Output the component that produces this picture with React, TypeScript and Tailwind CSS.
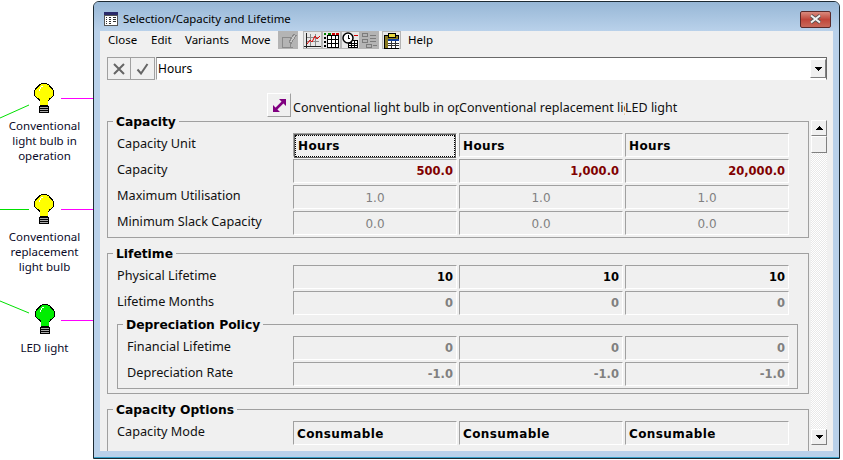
const TAHOMA = "font-['Noto_Sans','Liberation_Sans',sans-serif]";

const COLS = [
  "Conventional light bulb in operation",
  "Conventional replacement light bulb",
  "LED light",
];

const BULB_SHAPE =
  "M7 0h6v1h2v1h1v1h1v1h1v1h1v2h1v6h-1v1h-1v1h-1v1h-1v1h-1v1h-1v5H6v-5H5v-1H4v-1H3v-1H2v-1H1v-1H0V7h1V5h1V4h1V3h1V2h1V1h2z";

function Bulb({ color }: { color: string }) {
  return (
    <svg width="20" height="31" viewBox="0 0 20 31" shapeRendering="crispEdges">
      <path d={BULB_SHAPE} fill="#000" />
      <path d={BULB_SHAPE} fill={color} transform="translate(10 10.5) scale(0.9) translate(-10 -10.5)" />
      <path d="M7 3h2v1H7zM6 4h1v2H6zM5 6h1v2H5z" fill="#fff" />
      <path d="M5 23h10v7H5z" fill="#000" />
      <path d="M6 24h8v1H6zM6 26h8v1H6zM6 28h8v1H6z" fill="#a8a8a8" />
    </svg>
  );
}

function Node({ top, left, color, lines, labelTop }: { top: number; left: number; color: string; lines: string[]; labelTop: number }) {
  return (
    <>
      <div className="absolute" style={{ top, left }}>
        <Bulb color={color} />
      </div>
      <div
        className="absolute left-0 w-[89px] text-center text-[11.5px] leading-[15px] text-[#0a0a28]"
        style={{ top: labelTop }}
      >
        {lines.map((l) => (
          <div key={l}>{l}</div>
        ))}
      </div>
    </>
  );
}

function Diagram() {
  return (
    <div className="relative h-full w-[93px] shrink-0">
      <svg className="absolute inset-0" width="93" height="460" shapeRendering="crispEdges">
        <path d="M61 98.5h32M61 209.5h32M61 320.5h32" stroke="#ff00ff" />
        <path d="M0 118L29 105" stroke="#00e000" shapeRendering="auto" />
        <path d="M0 209.5h29" stroke="#00e000" />
        <path d="M0 301L29 313" stroke="#00e000" shapeRendering="auto" />
      </svg>
      <Node top={83} left={34} color="#ffff00" labelTop={118} lines={["Conventional", "light bulb in", "operation"]} />
      <Node top={194} left={34} color="#ffff00" labelTop={229} lines={["Conventional", "replacement", "light bulb"]} />
      <Node top={304} left={35} color="#00ee00" labelTop={340} lines={["LED light"]} />
    </div>
  );
}

function TableIcon() {
  return (
    <svg width="14" height="14" viewBox="0 0 14 14" shapeRendering="crispEdges">
      <rect width="14" height="14" fill="#555" />
      <rect y="0" width="14" height="3" fill="#2a2a6a" />
      <rect x="1" y="4" width="12" height="9" fill="#fff" />
      <path d="M2 5h1v1H2zM5 5h2v1H5zM9 5h3v1H9zM2 7h1v1H2zM5 7h2v1H5zM9 7h3v1H9zM2 9h1v1H2zM5 9h2v1H5zM9 9h3v1H9zM2 11h1v1H2zM5 11h2v1H5z" fill="#333" />
    </svg>
  );
}

function ToolIcon({ kind }: { kind: string }) {
  return (
    <svg width="17" height="17" viewBox="0 0 17 17" shapeRendering="crispEdges">
      {kind === "edit" && (
        <g fill="none" stroke="#8a8a8a">
          <path d="M2.500 5.500h8v10h-8zM1.500 15.500h11" />
          <path d="M9 10l5-8 2 1.500-5 8z" fill="#c8c8c8" />
        </g>
      )}
      {kind === "chart" && (
        <g>
          <path d="M6.500 2v12M11.500 2v12M2 5.500h13M2 9.500h13" stroke="#8a8a8a" fill="none" />
          <path d="M2.500 1v15M0 14.500h17" stroke="#222" fill="none" />
          <path d="M3 12l3-4 2 2 3-6 2 3 3-3" stroke="#e00000" fill="none" shapeRendering="auto" />
        </g>
      )}
      {kind === "grid" && (
        <g>
          <path d="M1 1h2v2H1zM5 1h3v2H5z" fill="#008000" />
          <path d="M9 1h3v2H9zM13 1h3v2h-3z" fill="#d00000" />
          <path d="M1 5h2v2H1zM1 9h2v2H1zM1 13h2v2H1z" fill="#000" />
          <path d="M4.500 3.500h11v12h-11zM4.500 7.500h11M4.500 11.500h11M8.500 3.500v12M12 3.500v12" stroke="#000" fill="#fff" />
        </g>
      )}
      {kind === "clock" && (
        <g>
          <path d="M6.500 8.500h9v7h-9zM6.500 11.500h9M6.500 13.500h9M9.500 8.500v7M12.500 8.500v7" stroke="#000" fill="#fff" />
          <circle cx="6" cy="6" r="5" fill="#fff" stroke="#000" strokeWidth="1.500" shapeRendering="auto" />
          <path d="M6 3v3h2" stroke="#000" fill="none" />
          <path d="M12 3h4" stroke="#d00000" />
        </g>
      )}
      {kind === "tree" && (
        <g fill="none" stroke="#7c7c7c">
          <path d="M1.500 1.500h5v3h-5zM1.500 7.500h5v3h-5zM5.500 12.500h5v3h-5zM9 3h6M9 6h6M9 9h6M12 13h4" />
        </g>
      )}
      {kind === "board" && (
        <g>
          <path d="M1.500 3.500h14v13h-14z" fill="#8a7a20" stroke="#000" />
          <path d="M5 1h7v4H5z" fill="#e8d840" stroke="#000" />
          <path d="M5 7h11v9H5z" fill="#fff" />
          <path d="M5 7h11v2H5z" fill="#1040a0" />
          <path d="M5 11h11M5 13h11M8.500 9v7M12.500 9v7" stroke="#333" fill="none" />
        </g>
      )}
    </svg>
  );
}

function MenuBar() {
  return (
    <div className="flex h-[19px] items-center pb-[2px] pl-[8px] text-[11.5px] leading-[17px] text-black">
      <span className="w-[43px]">Close</span>
      <span className="w-[34px]">Edit</span>
      <span className="w-[56px]">Variants</span>
      <span className="w-[37px]">Move</span>
      <div className="flex h-[18px] w-[20px] items-center justify-center self-start bg-[#b4b4b4]">
        <ToolIcon kind="edit" />
      </div>
      <div className="ml-[5px] flex h-[18px] self-start bg-[#b4b4b4]">
        {["chart", "grid", "clock"].map((k) => (
          <div key={k} className="flex w-[19px] items-center justify-center border border-[#b4b4b4] bg-[#e8e8e8]">
            <ToolIcon kind={k} />
          </div>
        ))}
        <div className="flex w-[19px] items-center justify-center">
          <ToolIcon kind="tree" />
        </div>
      </div>
      <div className="ml-[3px] flex h-[18px] w-[19px] items-center justify-center self-start border border-[#b4b4b4] bg-[#e8e8e8]">
        <ToolIcon kind="board" />
      </div>
      <span className="ml-[7px]">Help</span>
    </div>
  );
}

function Raised({ className, children }: { className: string; children?: React.ReactNode }) {
  return (
    <div
      className={`flex items-center justify-center border border-t-white border-l-white border-r-[#808080] border-b-[#808080] bg-[#f0f0f0] ${className}`}
    >
      {children}
    </div>
  );
}

function CommandBar() {
  return (
    <div className="ml-[7px] mt-[7px] flex h-[23px] w-[720px]">
      <div className="flex border border-[#a0a0a0] bg-[#f0f0f0]">
        <div className="flex w-[23px] items-center justify-center border-r border-[#a0a0a0]">
          <svg width="12" height="12" viewBox="0 0 12 12">
            <path d="M1 1l10 10M11 1L1 11" stroke="#666" strokeWidth="2" />
          </svg>
        </div>
        <div className="flex w-[23px] items-center justify-center">
          <svg width="13" height="12" viewBox="0 0 13 12">
            <path d="M1.500 6.500l3.500 4L11.500 1" stroke="#666" strokeWidth="2" fill="none" />
          </svg>
        </div>
      </div>
      <div className="ml-[1px] flex flex-1 items-center border border-t-[#696969] border-l-[#a0a0a0] border-r-[#696969] border-b-white bg-white pl-[1px] text-[12px] text-black">
        <span className="flex-1">Hours</span>
        <Raised className="h-[19px] w-[16px]">
          <svg width="7" height="4" viewBox="0 0 7 4" shapeRendering="crispEdges">
            <path d="M0 0h7v1H6v1H5v1H4v1H3V3H2V2H1V1H0z" fill="#000" />
          </svg>
        </Raised>
      </div>
    </div>
  );
}

function HeaderRow() {
  return (
    <div className="mt-[13px] flex h-[24px] text-[12.5px] leading-[29px] text-[#111]">
      <div className="ml-[167px] flex w-[24px] items-center justify-center border border-t-white border-l-white border-r-[#a0a0a0] border-b-[#a0a0a0]">
        <svg width="15" height="15" viewBox="0 0 15 15">
          <path d="M3 12L12 3" stroke="#800080" strokeWidth="2.500" />
          <path d="M7 1h7v7zM1 7v7h7z" fill="#800080" />
        </svg>
      </div>
      <div className="ml-[2px] flex">
        {COLS.map((c) => (
          <div key={c} className="w-[166px] overflow-hidden whitespace-nowrap">
            {c}
          </div>
        ))}
      </div>
    </div>
  );
}

type Variant = "text" | "focus" | "red" | "bold" | "grey" | "center";

function Field({ value, variant }: { value: string; variant: Variant }) {
  const tone = {
    text: "justify-start text-black font-bold tracking-[0.4px] text-[12px]",
    focus: "justify-start text-black font-bold tracking-[0.4px] text-[12px]",
    red: "justify-end text-[#800000] font-bold text-[11.5px]",
    bold: "justify-end text-black font-bold text-[11.5px]",
    grey: "justify-end text-[#808080] font-bold text-[11.5px]",
    center: "justify-center text-[#808080] text-[12px]",
  }[variant];
  return (
    <div
      className={`mr-[2px] flex h-[24px] w-[164px] items-center border border-t-[#a0a0a0] border-l-[#a0a0a0] border-r-white border-b-white px-[3px] pt-[1px] font-['DejaVu_Sans','Liberation_Sans',sans-serif] ${tone}`}
    >
      {variant === "focus" ? (
        <span className="-m-[2px] flex h-[22px] w-[160px] items-center border border-dotted border-black px-[2px] outline outline-1 outline-[#606060]">
          {value}
        </span>
      ) : (
        value
      )}
    </div>
  );
}

function Row({ label, values, variant, indent = 0, first }: { label: string; values: string[]; variant: Variant; indent?: number; first?: Variant }) {
  return (
    <div className="mt-[2px] flex h-[24px]">
      <div className="shrink-0 pt-[1px] text-[12.7px] leading-[18px] text-[#111]" style={{ width: 176 - indent }}>
        {label}
      </div>
      {values.map((v, i) => (
        <Field key={i} value={v} variant={i === 0 && first ? first : variant} />
      ))}
    </div>
  );
}

function Legend({ children }: { children: React.ReactNode }) {
  return (
    <div className="absolute -top-[8px] left-[5px] bg-[#f0f0f0] px-[3px] font-['DejaVu_Sans','Liberation_Sans',sans-serif] text-[12.3px] font-bold leading-[16px] text-black">
      {children}
    </div>
  );
}

function Capacity() {
  return (
    <section className="relative ml-[7px] mt-[4px] h-[117px] w-[702px] border border-[#a0a0a0] pl-[9px] pt-[9px]">
      <Legend>Capacity</Legend>
      <Row label="Capacity Unit" values={["Hours", "Hours", "Hours"]} variant="text" first="focus" />
      <Row label="Capacity" values={["500.0", "1,000.0", "20,000.0"]} variant="red" />
      <Row label="Maximum Utilisation" values={["1.0", "1.0", "1.0"]} variant="center" />
      <Row label="Minimum Slack Capacity" values={["0.0", "0.0", "0.0"]} variant="center" />
    </section>
  );
}

function Lifetime() {
  return (
    <section className="relative ml-[7px] mt-[15px] h-[141px] w-[702px] border border-[#a0a0a0] pl-[9px] pt-[9px]">
      <Legend>Lifetime</Legend>
      <Row label="Physical Lifetime" values={["10", "10", "10"]} variant="bold" />
      <Row label="Lifetime Months" values={["0", "0", "0"]} variant="grey" />
      <div className="relative mt-[9px] h-[65px] w-[681px] border border-[#a0a0a0] pl-[9px] pt-[9px]">
        <Legend>Depreciation Policy</Legend>
        <Row label="Financial Lifetime" values={["0", "0", "0"]} variant="grey" indent={10} />
        <Row label="Depreciation Rate" values={["-1.0", "-1.0", "-1.0"]} variant="grey" indent={10} />
      </div>
    </section>
  );
}

function CapacityOptions() {
  return (
    <section className="relative ml-[7px] mt-[15px] h-[60px] w-[702px] border border-[#a0a0a0] pl-[9px] pt-[9px]">
      <Legend>Capacity Options</Legend>
      <Row label="Capacity Mode" values={["Consumable", "Consumable", "Consumable"]} variant="text" />
    </section>
  );
}

function ScrollBar() {
  return (
    <div className="absolute right-[6px] top-[89px] flex h-[325px] w-[16px] flex-col bg-[repeating-conic-gradient(#ffffff_0%_25%,#e8e8e8_0%_50%)] bg-[length:2px_2px]">
      <Raised className="h-[16px] w-[16px]">
        <svg width="7" height="4" viewBox="0 0 7 4" shapeRendering="crispEdges">
          <path d="M3 0h1v1h1v1h1v1h1v1H0V3h1V2h1V1h1z" fill="#000" />
        </svg>
      </Raised>
      <Raised className="h-[17px] w-[16px]" />
      <div className="flex-1" />
      <Raised className="h-[16px] w-[16px]">
        <svg width="7" height="4" viewBox="0 0 7 4" shapeRendering="crispEdges">
          <path d="M0 0h7v1H6v1H5v1H4v1H3V3H2V2H1V1H0z" fill="#000" />
        </svg>
      </Raised>
    </div>
  );
}

function Window() {
  return (
    <div className="relative mt-[1px] flex h-[458px] w-[747px] flex-col overflow-hidden rounded-t-[6px] border border-[#1c2a33] bg-[#b9d1ea]">
      <div className="flex h-[29px] shrink-0 items-center bg-gradient-to-b from-[#97b7d6] to-[#b9d1ea] pl-[10px] pt-[5px] text-[11.4px] text-black">
        <TableIcon />
        <span className="ml-[5px]">Selection/Capacity and Lifetime</span>
        <div className="ml-auto mr-[8px] flex h-[17px] w-[31px] items-center justify-center rounded-[2px] border border-[#5a2a2a] bg-gradient-to-b from-[#d98a7e] via-[#c0463a] to-[#c8685a]">
          <svg width="13" height="10" viewBox="0 0 13 10">
            <path d="M2 1.500l9 7M11 1.500l-9 7" stroke="#555" strokeWidth="3.500" />
            <path d="M2 1.500l9 7M11 1.500l-9 7" stroke="#f4f4f4" strokeWidth="2" />
          </svg>
        </div>
      </div>
      <div className="relative mx-[6px] h-[420px] shrink-0 overflow-hidden bg-[#f0f0f0]">
        <MenuBar />
        <CommandBar />
        <HeaderRow />
        <Capacity />
        <Lifetime />
        <CapacityOptions />
        <ScrollBar />
      </div>
      <div className="flex-1" />
      <div className="h-[1px] shrink-0 bg-[#36a0c8]" />
    </div>
  );
}

export default function App() {
  return (
    <div className={`flex h-[460px] w-[843px] overflow-hidden bg-white ${TAHOMA}`}>
      <Diagram />
      <Window />
    </div>
  );
}
